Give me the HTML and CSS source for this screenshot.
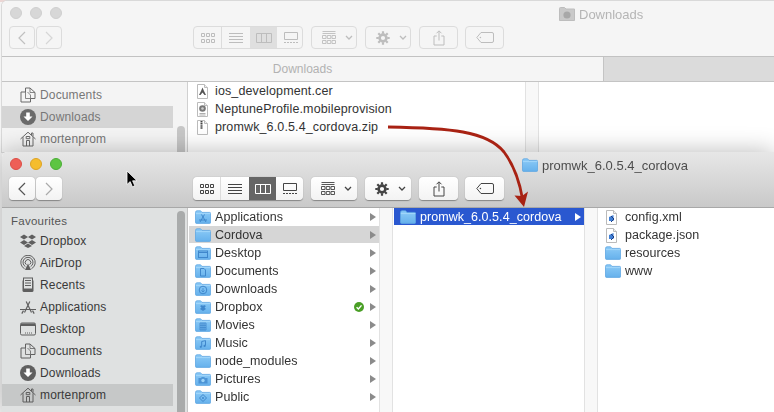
FILE: index.html
```html
<!DOCTYPE html>
<html lang="en">
<head>
<meta charset="utf-8">
<title>Finder windows</title>
<link rel="stylesheet" href="styles.css">
</head>
<body>
<svg class="defs" width="0" height="0" aria-hidden="true">
  <defs>
    <linearGradient id="fg" x1="0" y1="0" x2="0" y2="1"><stop offset="0" stop-color="#8ccbf7"/><stop offset="1" stop-color="#66b1ec"/></linearGradient>
    <symbol id="folder" viewBox="0 0 16 14"><path d="M.5 2.5Q.5 .8 2 .8H5.6L7 2.4H14.6Q15.6 2.4 15.6 3.4V12.4Q15.6 13.4 14.6 13.4H1.5Q.5 13.4 .5 12.4Z" fill="url(#fg)" stroke="#5ea6e2" stroke-width=".8"/><path d="M.8 3.6H15.4" stroke="#a9dbfb" stroke-width=".8"/></symbol>
    <symbol id="g-app" viewBox="0 0 16 14"><path d="M5 12L9.5 4.5M11 12L6.5 4.5M4 10H12" stroke="#3f87cc" stroke-width="1" fill="none"/></symbol>
    <symbol id="g-desk" viewBox="0 0 16 14"><rect x="3.5" y="5" width="9" height="6.5" fill="none" stroke="#3f87cc"/><path d="M3.5 6.5H12.5" stroke="#3f87cc"/></symbol>
    <symbol id="g-doc" viewBox="0 0 16 14"><path d="M5.5 4.5H9L10.5 6V12H5.5Z" fill="none" stroke="#3f87cc"/></symbol>
    <symbol id="g-down" viewBox="0 0 16 14"><circle cx="8" cy="8" r="3.8" fill="none" stroke="#3f87cc"/><path d="M8 6V10M6.4 8.4L8 10L9.6 8.4" stroke="#3f87cc" fill="none" stroke-width=".8"/></symbol>
    <symbol id="g-drop" viewBox="0 0 16 14"><path d="M5 6L7 5L8 6L9 5L11 6L9.5 7.5L11 9L8 11L5 9L6.5 7.5Z" fill="#3f87cc"/></symbol>
    <symbol id="g-movie" viewBox="0 0 16 14"><path d="M5 5H11V12H5ZM7 5V12M9 5V12M5 7.3H11M5 9.6H11" fill="none" stroke="#3f87cc" stroke-width=".8"/></symbol>
    <symbol id="g-music" viewBox="0 0 16 14"><path d="M6.7 10.5V5.5L10.5 4.6V9.6" fill="none" stroke="#3f87cc"/><circle cx="5.8" cy="10.8" r="1.1" fill="#3f87cc"/><circle cx="9.6" cy="9.9" r="1.1" fill="#3f87cc"/></symbol>
    <symbol id="g-pic" viewBox="0 0 16 14"><path d="M3.5 6H6L6.8 5H9.2L10 6H12.5V11.5H3.5Z" fill="#3f87cc" opacity=".75"/><circle cx="8" cy="8.5" r="1.7" fill="#9bd3f8"/></symbol>
    <symbol id="g-pub" viewBox="0 0 16 14"><path d="M8 4.5L11.5 8L8 11.5L4.5 8Z" fill="none" stroke="#3f87cc"/><circle cx="8" cy="8" r="1" fill="#3f87cc"/></symbol>

    <symbol id="i-icons" viewBox="0 0 16 12"><path d="M1.5 1.5h3v3h-3zM6.5 1.5h3v3h-3zM11.5 1.5h3v3h-3zM1.5 7.5h3v3h-3zM6.5 7.5h3v3h-3zM11.5 7.5h3v3h-3z" fill="none" stroke="currentColor"/></symbol>
    <symbol id="i-list" viewBox="0 0 16 12"><path d="M1 1.5H15M1 4.5H15M1 7.5H15M1 10.5H15" stroke="currentColor"/></symbol>
    <symbol id="i-cols" viewBox="0 0 16 12"><path d="M.5 1.5h15v9H.5zM5.5 1.5v9M10.5 1.5v9" fill="none" stroke="currentColor"/></symbol>
    <symbol id="i-gallery" viewBox="0 0 16 12"><path d="M1.5 .5h13v7h-13z" fill="none" stroke="currentColor"/><path d="M1 10.5h2M4 10.5h2M7 10.5h2M10 10.5h2M13 10.5h2" stroke="currentColor"/></symbol>
    <symbol id="i-arr" viewBox="0 0 14 13"><path d="M.5 .5H13.5M.5 2.5H13.5" stroke="currentColor" stroke-width=".9"/><path d="M.5 4.5h3.5v3H.5zM5.3 4.5h3.5v3H5.3zM10 4.5h3.5v3H10zM.5 9.5h3.5v3H.5zM5.3 9.5h3.5v3H5.3zM10 9.5h3.5v3H10z" fill="none" stroke="currentColor" stroke-width=".9"/></symbol>
    <symbol id="i-chev" viewBox="0 0 8 5"><path d="M1 1L4 4L7 1" fill="none" stroke="currentColor" stroke-width="1.3"/></symbol>
    <symbol id="i-gear" viewBox="0 0 14 14"><circle cx="7" cy="7" r="3.4" fill="none" stroke="currentColor" stroke-width="2.6"/><path d="M7 .3V2.8M7 11.2V13.7M.3 7H2.8M11.2 7H13.7M2.3 2.3L4 4M10 10L11.7 11.7M2.3 11.7L4 10M10 4L11.7 2.3" stroke="currentColor" stroke-width="2.2"/></symbol>
    <symbol id="i-share" viewBox="0 0 12 16"><path d="M3.7 6H1V15H11V6H8.3" fill="none" stroke="currentColor"/><path d="M6 10.5V1M3.5 3.3L6 .8L8.5 3.3" fill="none" stroke="currentColor"/></symbol>
    <symbol id="i-tag" viewBox="0 0 18 11"><path d="M5 .5H16Q17.5 .5 17.5 2V9Q17.5 10.5 16 10.5H5L.8 5.5Z" fill="none" stroke="currentColor"/><circle cx="4.4" cy="5.5" r=".8" fill="currentColor"/></symbol>

    <symbol id="s-dropbox" viewBox="0 0 16 14"><path d="M4 .5L8 3L4 5.5L0 3ZM12 .5L16 3L12 5.5L8 3ZM4 6L8 8.5L4 11L0 8.5ZM12 6L16 8.5L12 11L8 8.5ZM8 9.4L12 12L8 14L4 12Z" fill="currentColor"/></symbol>
    <symbol id="s-airdrop" viewBox="0 0 16 16"><g fill="none" stroke="currentColor"><path d="M4.6 13.8a7.2 7.2 0 1 1 6.8 0"/><path d="M5.4 11.6a5 5 0 1 1 5.2 0"/><path d="M6.4 9.7a2.8 2.8 0 1 1 3.2 0"/></g><path d="M8 8.5L11 15H5Z" fill="currentColor"/></symbol>
    <symbol id="s-recents" viewBox="0 0 16 16"><path d="M2.5 3.5V13.5Q2.5 15 4 15H12Q13.5 15 13.5 13.5V3.5" fill="currentColor"/><rect x="3.5" y="1" width="9" height="11" fill="#dfe1e1" stroke="currentColor"/><path d="M5 3.5H11M5 6H11M5 8.5H11" stroke="currentColor"/></symbol>
    <symbol id="s-apps" viewBox="0 0 16 16"><path d="M4.5 13.5L9.8 2.5M11.5 13.5L6.2 2.5M0 10.5H16M1.8 14.6L3.5 11.6M14.2 14.6L12.5 11.6" stroke="currentColor" stroke-width="1.2" fill="none"/></symbol>
    <symbol id="s-desktop" viewBox="0 0 16 14"><rect x=".5" y="1" width="15" height="12" rx="1.4" fill="none" stroke="currentColor"/><path d="M1 1.5H15V4H1Z" fill="currentColor"/><path d="M5 11h1M7 11h1M9 11h1M11 11h1" stroke="currentColor"/></symbol>
    <symbol id="s-docs" viewBox="0 0 16 16"><path d="M1 5H5.5V1H10L15 5.5V11.5H10.5V15H1Z" fill="none" stroke="currentColor"/><path d="M5.5 5V11.5H10.5M10 1V5.5H15M7.5 5L10.5 8V11.5" fill="none" stroke="currentColor" stroke-width=".8"/></symbol>
    <symbol id="s-down" viewBox="0 0 16 16"><circle cx="8" cy="8" r="8" fill="currentColor"/><path d="M6.2 3.5H9.8V7.5H12.5L8 12L3.5 7.5H6.2Z" fill="#fff"/></symbol>
    <symbol id="s-home" viewBox="0 0 16 16"><path d="M.5 8L8 1.2L15.5 8M3 6.2V15H13V6.2M11.5 4V2H13V5.5" fill="none" stroke="currentColor"/><path d="M6.5 15V9.5H9.5V15M6.2 5.5h3.6v2.2H6.2z" fill="none" stroke="currentColor"/></symbol>

    <symbol id="f-blank" viewBox="0 0 11 15"><path d="M.5 .5H7.5L10.5 3.5V14.5H.5Z" fill="#fff" stroke="#bbb"/><path d="M7.5 .5V3.5H10.5" fill="#eee" stroke="#bbb"/></symbol>
  </defs>
</svg>

<div class="top-strip">
  <span class="scrap scrap-dark"></span>
  <span class="scrap scrap-green"></span>
</div>

<section class="window window-back">
  <header class="head">
    <div class="title-row">
      <div class="lights"><i class="light"></i><i class="light"></i><i class="light"></i></div>
      <div class="win-title back-title">
        <svg class="t-folder" viewBox="0 0 16 14"><path d="M.5 1.5Q.5 .5 1.5 .5H5.5L7 2H15.5V13.5H.5Z" fill="#c9c9c9" stroke="#bdbdbd"/><circle cx="8" cy="8" r="3.6" fill="#a8a8a8"/></svg>
        <span>Downloads</span>
      </div>
    </div>
    <div class="toolbar">
      <div class="nav"><button class="btn nav-btn"><svg class="nav-ic" viewBox="0 0 8 14"><path d="M7 1L1 7L7 13" fill="none" stroke="currentColor" stroke-width="1.2"/></svg></button><button class="btn nav-btn nav-off"><svg class="nav-ic" viewBox="0 0 8 14"><path d="M1 1L7 7L1 13" fill="none" stroke="currentColor" stroke-width="1.2"/></svg></button></div>
      <div class="btn views">
        <span class="seg seg-a"><svg class="v-ic"><use href="#i-icons"/></svg></span>
        <span class="seg seg-b"><svg class="v-ic"><use href="#i-list"/></svg></span>
        <span class="seg seg-c seg-on"><svg class="v-ic"><use href="#i-cols"/></svg></span>
        <span class="seg seg-d"><svg class="v-ic"><use href="#i-gallery"/></svg></span>
      </div>
      <div class="btn drop arrange"><svg class="arr-ic"><use href="#i-arr"/></svg><svg class="chev"><use href="#i-chev"/></svg></div>
      <div class="btn drop action"><svg class="gear-ic"><use href="#i-gear"/></svg><svg class="chev"><use href="#i-chev"/></svg></div>
      <div class="btn plain share"><svg class="share-ic"><use href="#i-share"/></svg></div>
      <div class="btn plain tag"><svg class="tag-ic"><use href="#i-tag"/></svg></div>
    </div>
  </header>
  <div class="pathbar"><div class="path-tab">Downloads</div><div class="path-rest"></div></div>
  <div class="body body-back">
    <aside class="sidebar">
      <div class="side-item"><svg class="s-ic"><use href="#s-docs"/></svg>Documents</div>
      <div class="side-item side-on"><svg class="s-ic"><use href="#s-down"/></svg>Downloads</div>
      <div class="side-item"><svg class="s-ic"><use href="#s-home"/></svg>mortenprom</div>
      <span class="scroll"></span>
    </aside>
    <div class="col col-files">
      <div class="row"><svg class="file-ic" viewBox="0 0 11 15"><use href="#f-blank"/><path d="M5.5 3.5L7 7L9 11H7.5L5.5 8.5L3.5 11H2L4 7Z" fill="#555"/></svg><span class="name">ios_development.cer</span></div>
      <div class="row"><svg class="file-ic" viewBox="0 0 11 15"><use href="#f-blank"/><circle cx="5.5" cy="6.5" r="3.3" fill="#777"/><circle cx="5.5" cy="6.5" r="1.3" fill="#ccc"/><path d="M2.5 11.5H8.5M2.5 13H8.5" stroke="#999" stroke-width=".8"/></svg><span class="name">NeptuneProfile.mobileprovision</span></div>
      <div class="row"><svg class="file-ic" viewBox="0 0 11 15"><use href="#f-blank"/><path d="M4.5 1V9" stroke="#444" stroke-width="2" stroke-dasharray="1.5 .6"/></svg><span class="name">promwk_6.0.5.4_cordova.zip</span></div>
    </div>
    <div class="strip"></div>
    <div class="col col-rest"></div>
  </div>
</section>

<section class="window window-front">
  <header class="head">
    <div class="title-row">
      <div class="lights"><i class="light red"></i><i class="light yellow"></i><i class="light green"></i></div>
      <div class="win-title front-title">
        <svg class="t-folder"><use href="#folder"/></svg>
        <span>promwk_6.0.5.4_cordova</span>
      </div>
    </div>
    <div class="toolbar">
      <div class="nav"><button class="btn nav-btn"><svg class="nav-ic" viewBox="0 0 8 14"><path d="M7 1L1 7L7 13" fill="none" stroke="currentColor" stroke-width="1.2"/></svg></button><button class="btn nav-btn nav-off"><svg class="nav-ic" viewBox="0 0 8 14"><path d="M1 1L7 7L1 13" fill="none" stroke="currentColor" stroke-width="1.2"/></svg></button></div>
      <div class="btn views">
        <span class="seg seg-a"><svg class="v-ic"><use href="#i-icons"/></svg></span>
        <span class="seg seg-b"><svg class="v-ic"><use href="#i-list"/></svg></span>
        <span class="seg seg-c seg-on"><svg class="v-ic"><use href="#i-cols"/></svg></span>
        <span class="seg seg-d"><svg class="v-ic"><use href="#i-gallery"/></svg></span>
      </div>
      <div class="btn drop arrange"><svg class="arr-ic"><use href="#i-arr"/></svg><svg class="chev"><use href="#i-chev"/></svg></div>
      <div class="btn drop action"><svg class="gear-ic"><use href="#i-gear"/></svg><svg class="chev"><use href="#i-chev"/></svg></div>
      <div class="btn plain share"><svg class="share-ic"><use href="#i-share"/></svg></div>
      <div class="btn plain tag"><svg class="tag-ic"><use href="#i-tag"/></svg></div>
    </div>
  </header>
  <div class="body body-front">
    <aside class="sidebar">
      <h2 class="side-head">Favourites</h2>
      <div class="side-item"><svg class="s-ic"><use href="#s-dropbox"/></svg>Dropbox</div>
      <div class="side-item"><svg class="s-ic"><use href="#s-airdrop"/></svg>AirDrop</div>
      <div class="side-item"><svg class="s-ic"><use href="#s-recents"/></svg>Recents</div>
      <div class="side-item"><svg class="s-ic"><use href="#s-apps"/></svg>Applications</div>
      <div class="side-item"><svg class="s-ic"><use href="#s-desktop"/></svg>Desktop</div>
      <div class="side-item"><svg class="s-ic"><use href="#s-docs"/></svg>Documents</div>
      <div class="side-item"><svg class="s-ic"><use href="#s-down"/></svg>Downloads</div>
      <div class="side-item side-on"><svg class="s-ic"><use href="#s-home"/></svg>mortenprom</div>
      <span class="scroll"></span>
    </aside>
    <div class="col col-1">
      <div class="row"><svg class="fold"><use href="#folder"/><use href="#g-app"/></svg><span class="name">Applications</span><i class="tri"></i></div>
      <div class="row row-grey"><svg class="fold"><use href="#folder"/></svg><span class="name">Cordova</span><i class="tri"></i></div>
      <div class="row"><svg class="fold"><use href="#folder"/><use href="#g-desk"/></svg><span class="name">Desktop</span><i class="tri"></i></div>
      <div class="row"><svg class="fold"><use href="#folder"/><use href="#g-doc"/></svg><span class="name">Documents</span><i class="tri"></i></div>
      <div class="row"><svg class="fold"><use href="#folder"/><use href="#g-down"/></svg><span class="name">Downloads</span><i class="tri"></i></div>
      <div class="row"><svg class="fold"><use href="#folder"/><use href="#g-drop"/></svg><span class="name">Dropbox</span><svg class="check" viewBox="0 0 10 10"><circle cx="5" cy="5" r="5" fill="#4a9f26"/><path d="M2.6 5.2L4.4 7L7.5 3.4" fill="none" stroke="#fff" stroke-width="1.4"/></svg><i class="tri"></i></div>
      <div class="row"><svg class="fold"><use href="#folder"/><use href="#g-movie"/></svg><span class="name">Movies</span><i class="tri"></i></div>
      <div class="row"><svg class="fold"><use href="#folder"/><use href="#g-music"/></svg><span class="name">Music</span><i class="tri"></i></div>
      <div class="row"><svg class="fold"><use href="#folder"/></svg><span class="name">node_modules</span><i class="tri"></i></div>
      <div class="row"><svg class="fold"><use href="#folder"/><use href="#g-pic"/></svg><span class="name">Pictures</span><i class="tri"></i></div>
      <div class="row"><svg class="fold"><use href="#folder"/><use href="#g-pub"/></svg><span class="name">Public</span><i class="tri"></i></div>
    </div>
    <div class="strip"></div>
    <div class="col col-2">
      <div class="row row-sel"><svg class="fold"><use href="#folder"/></svg><span class="name">promwk_6.0.5.4_cordova</span><i class="tri"></i></div>
    </div>
    <div class="strip"></div>
    <div class="col col-3">
      <div class="row"><svg class="code-ic" viewBox="0 0 11 15"><use href="#f-blank"/><path d="M3 7L7.5 5V11H3Z" fill="#3f7fd6"/><path d="M5 6L8 9L5 12" fill="none" stroke="#1d3d80"/></svg><span class="name">config.xml</span></div>
      <div class="row"><svg class="code-ic" viewBox="0 0 11 15"><use href="#f-blank"/><path d="M3 7L7.5 5V11H3Z" fill="#3f7fd6"/><path d="M5 6L8 9L5 12" fill="none" stroke="#1d3d80"/></svg><span class="name">package.json</span></div>
      <div class="row"><svg class="fold"><use href="#folder"/></svg><span class="name">resources</span></div>
      <div class="row"><svg class="fold"><use href="#folder"/></svg><span class="name">www</span></div>
    </div>
  </div>
</section>

<svg class="cursor" viewBox="0 0 12 18"><path d="M1 1V14.5L4.2 11.6L6.4 16.8L8.8 15.8L6.6 10.8H11Z" fill="#000" stroke="#fff" stroke-width=".8"/></svg>

<svg class="annot" viewBox="0 0 774 412"><path d="M388 127C450 128 487 131 504 152C516 168 520 184 522.5 199" fill="none" stroke="#a82213" stroke-width="2.8"/><path d="M514.5 195.5L524 207L528 191.5L522 196Z" fill="#a82213"/></svg>
</body>
</html>
```

FILE: styles.css
```css
* { box-sizing: border-box; }
html, body { margin: 0; padding: 0; }
body {
  position: relative;
  width: 774px;
  height: 412px;
  overflow: hidden;
  background: #f4f4f4;
  font-family: "Liberation Sans", Arial, sans-serif;
  font-size: 12.5px;
  color: #333;
}
.defs { position: absolute; }

.top-strip { position: absolute; top: 0; left: 0; width: 774px; height: 2px; background: #ecd6d4; }
.scrap { position: absolute; top: 0; height: 2px; }
.scrap-dark { left: 249px; width: 1px; background: #555; }
.scrap-green { left: 292px; width: 13px; background: #7fa77a; }

.window { position: absolute; left: 2px; width: 772px; display: flex; flex-direction: column; overflow: hidden; border-radius: 5px 0 0 0; filter: blur(.3px); }
.window-back { top: 1px; height: 151px; background: #fff; box-shadow: 0 0 0 1px #d9d9d9; }
.window-front { top: 152px; height: 260px; box-shadow: 0 0 24px rgba(0,0,0,.28); background: #fff; }

.head { height: 56px; flex: none; padding: 6px 0 0; border-bottom: 1px solid #c2c2c2; }
.window-back .head { background: #f5f5f5; color: #bdbdbd; }
.window-front .head { background: linear-gradient(#e7e7e7, #c9c9c9); border-bottom-color: #a8a8a8; color: #444; }

.title-row { display: flex; height: 12px; }
.lights { display: flex; gap: 8px; padding-left: 8px; }
.light { width: 12px; height: 12px; border-radius: 50%; background: #d7d7d7; border: 1px solid #cfcfcf; display: block; }
.red { background: #ee5f57; border-color: #dd4d45; }
.yellow { background: #f5bd2e; border-color: #dfa323; }
.green { background: #5dc542; border-color: #4aae35; }

.win-title { display: flex; align-items: center; gap: 4px; height: 14px; font-size: 13px; white-space: nowrap; }
.back-title { margin-left: 497px; color: #b5b5b5; }
.front-title { margin-left: 460px; color: #4d4d4d; }
.t-folder { width: 16px; height: 14px; flex: none; }

.toolbar { display: flex; margin-top: 7px; height: 23px; padding-left: 7px; }
.btn { height: 23px; border-radius: 4px; padding: 0; font: inherit; color: inherit; flex: none; display: flex; align-items: center; justify-content: center; }
.window-back .btn { background: #f5f5f5; border: 1px solid #dcdcdc; }
.window-front .btn { background: linear-gradient(#fff, #f3f3f3); border: 0; box-shadow: 0 .5px 1px rgba(0,0,0,.35); }

.nav { display: flex; gap: 1px; width: 53px; }
.nav-btn { width: 26px; }
.nav-ic { width: 8px; height: 14px; color: #555; }
.window-back .nav-ic { color: #c0c0c0; }
.nav-off .nav-ic { color: #aaa; }
.window-back .nav-off .nav-ic { color: #d6d6d6; }

.views { width: 110px; margin-left: 131px; overflow: hidden; justify-content: flex-start; }
.seg { height: 100%; display: flex; align-items: center; justify-content: center; flex: none; }
.seg-a { width: 28px; border-right: 1px solid #dcdcdc; }
.seg-b { width: 28px; }
.seg-c { width: 27px; }
.seg-d { width: 27px; }
.v-ic { width: 16px; height: 12px; }
.window-back .seg-on { background: #dfdfdf; }
.window-front .seg-on { background: #656565; color: #fff; }

.arrange { width: 46px; margin-left: 8px; }
.action { width: 46px; margin-left: 8px; }
.share { width: 39px; margin-left: 8px; }
.tag { width: 39px; margin-left: 7px; }
.drop { justify-content: flex-start; padding-left: 10px; }
.arr-ic { width: 14px; height: 13px; flex: none; }
.gear-ic { width: 14px; height: 14px; flex: none; }
.chev { width: 8px; height: 5px; margin-left: 9px; flex: none; }
.share-ic { width: 12px; height: 16px; }
.tag-ic { width: 18px; height: 11px; }

.pathbar { display: flex; height: 25px; flex: none; border-bottom: 1px solid #c4c4c4; }
.path-tab { width: 601px; background: #f5f5f5; color: #b2b2b2; font-size: 12px; line-height: 24px; text-align: center; }
.path-rest { flex: 1; background: #dbdbdb; border-left: 1px solid #c4c4c4; }

.body { flex: 1; display: flex; min-height: 0; }
.sidebar { position: relative; width: 186px; flex: none; border-right: 1px solid #d0d0d0; }
.body-back .sidebar { background: #f4f4f4; padding-top: 2px; color: #777; }
.body-front .sidebar { background: #dfe1e1; padding-top: 5px; color: #3a3a3a; border-right-color: #c4c4c4; }
.side-head { margin: 0; height: 17px; padding-left: 9px; font-size: 11.5px; line-height: 17px; font-weight: 400; color: #555; letter-spacing: .25px; }
.side-item { height: 22px; width: 171px; display: flex; align-items: center; padding-left: 18px; gap: 4px; font-size: 12px; letter-spacing: .15px; white-space: nowrap; }
.s-ic { width: 16px; height: 16px; flex: none; color: #5f5f5f; }
.body-back .s-ic { color: #6a6a6a; }
.body-back .side-on { background: #d5d5d5; }
.body-front .side-on { background: #c6c8c8; }
.scroll { position: absolute; right: 2px; width: 8px; bottom: -4px; border-radius: 4px; }
.body-back .scroll { top: 44px; background: #c7c7c7; }
.body-front .scroll { top: 3px; background: #a9abab; }

.col { min-width: 0; background: #fff; }
.col-files { width: 337px; }
.col-1, .col-2 { width: 191px; }
.col-rest, .col-3 { flex: 1; }
.col-1 { padding-left: 1px; }
.col-2 { padding-left: 1px; }
.strip { width: 14px; flex: none; background: #f8f8f8; border-left: 1px solid #e2e2e2; border-right: 1px solid #e2e2e2; }

.row { height: 18px; display: flex; align-items: center; gap: 4px; white-space: nowrap; padding-left: 6px; letter-spacing: .05px; }
.name { flex: 1; min-width: 0; }
.col-files .row { padding-left: 9px; gap: 7px; letter-spacing: .13px; }
.col-3 .row { padding-left: 7px; }
.fold { width: 16px; height: 14px; flex: none; }
.file-ic { width: 11px; height: 15px; flex: none; }
.code-ic { width: 11px; height: 15px; flex: none; margin: 0 4px 0 1px; }
.col-1 .row { padding-right: 3px; }
.col-2 .row { padding-right: 3px; }
.row-grey { background: #d6d6d6; height: 17px; margin-bottom: 1px; }
.row-sel { background: #2a58d0; color: #fff; height: 17px; }
.tri { width: 0; height: 0; border-left: 6px solid #8b8b8b; border-top: 4px solid transparent; border-bottom: 4px solid transparent; flex: none; }
.row-sel .tri { border-left-color: #fff; }
.check { width: 10px; height: 10px; flex: none; margin-right: 2px; }

.cursor { position: absolute; left: 126px; top: 170px; width: 12px; height: 18px; }
.annot { position: absolute; inset: 0; width: 774px; height: 412px; pointer-events: none; filter: blur(.3px); }
```
